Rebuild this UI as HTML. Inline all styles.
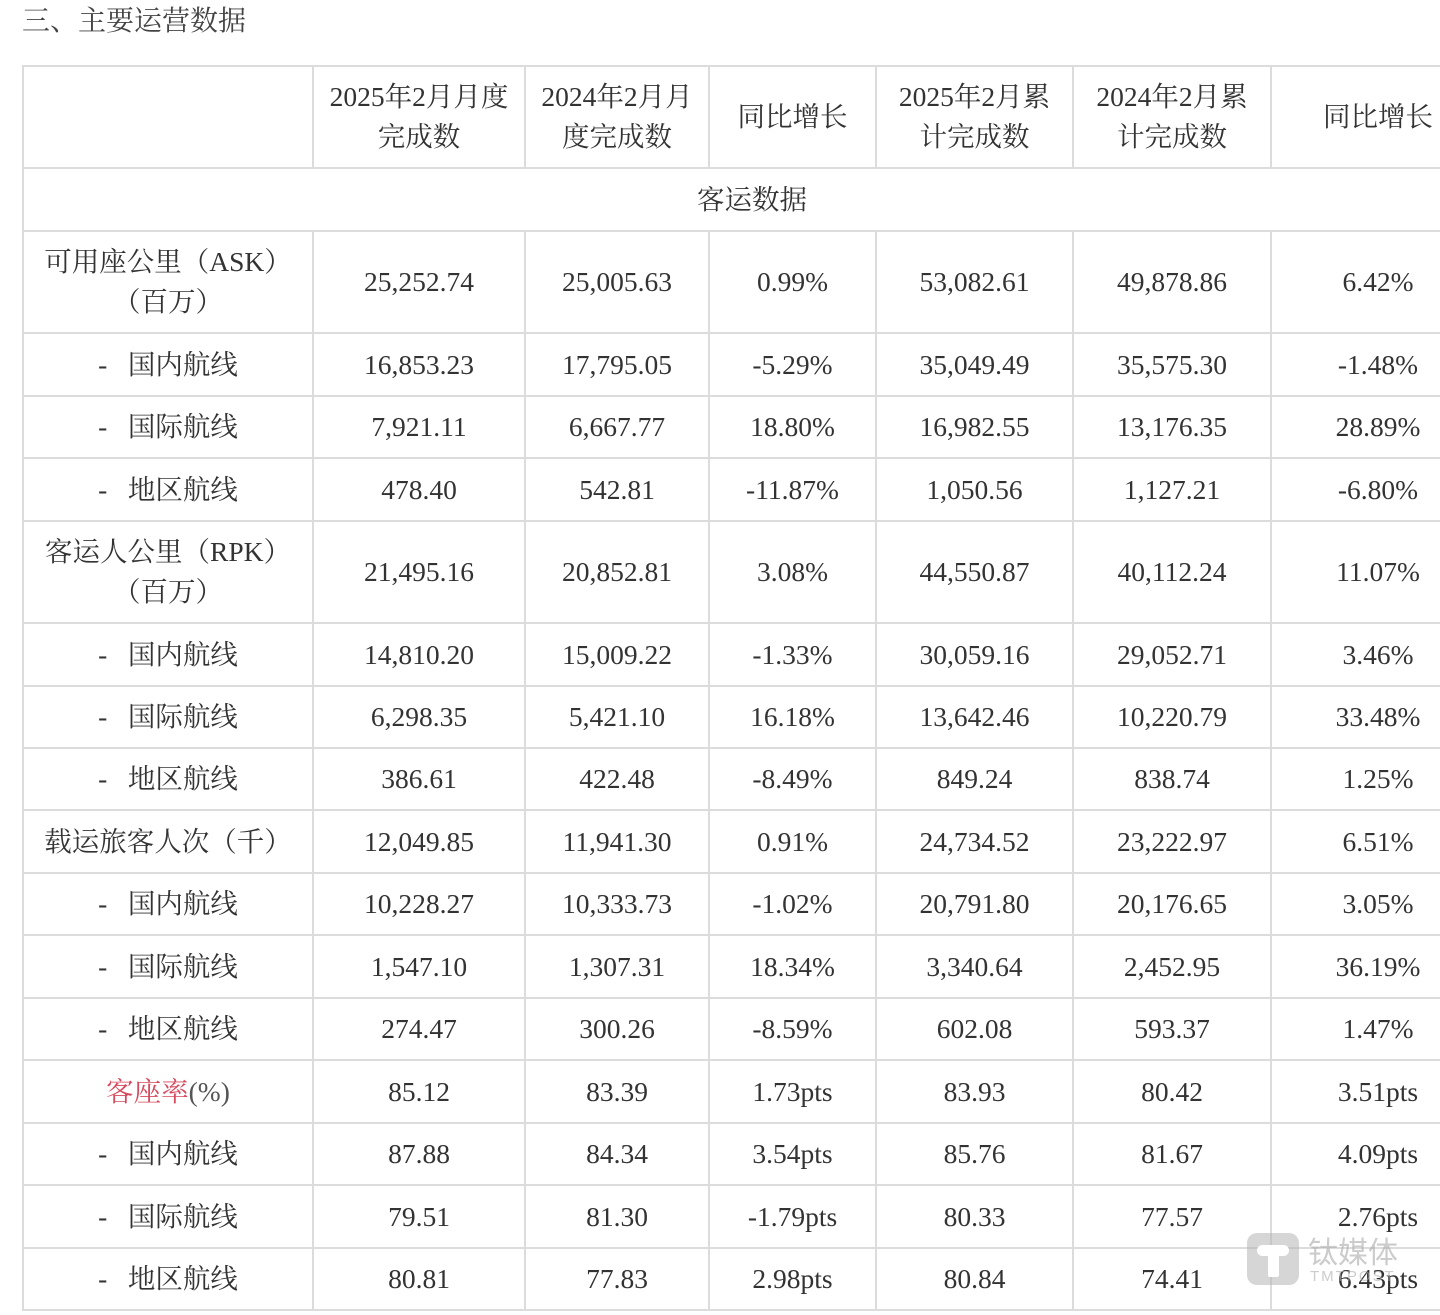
<!DOCTYPE html>
<html><head><meta charset="utf-8"><style>
body{margin:0;width:1440px;height:1315px;overflow:hidden;background:#fff;font-family:"Liberation Serif","Noto Serif CJK SC","Noto Serif CJK JP","Noto Serif CJK TC",serif;color:#333;position:relative}
h3{position:absolute;left:22px;top:2px;margin:0;font-weight:normal;font-size:28px;color:#444;line-height:40px}
table{position:absolute;left:22px;top:65px;border-collapse:collapse;table-layout:fixed;width:1462px}
td{border:2px solid #dcdcdc;text-align:center;font-size:27.5px;line-height:40px;padding:0 2px;vertical-align:middle;white-space:nowrap}
.r{color:#d64a5e}
.s{color:#555}
.wm{position:absolute;left:1247px;top:1233px;width:52px;height:52px;border-radius:10px;background:rgba(180,180,180,.55)}
.wm:before{content:"";position:absolute;left:10px;top:12px;width:32px;height:11px;border-radius:6px;background:#fff}
.wm:after{content:"";position:absolute;left:21px;top:20px;width:11px;height:24px;background:#fff;border-radius:2px}
.wt{position:absolute;left:1308px;top:1232px;font-family:"Noto Sans CJK SC",sans-serif;font-size:30px;color:rgba(170,170,170,.6);line-height:36px}
.wt2{position:absolute;left:1310px;top:1268px;font-family:"Liberation Sans",sans-serif;font-size:15px;color:rgba(170,170,170,.6);letter-spacing:2px}
</style></head><body>
<h3>三、主要运营数据</h3>
<table>
<colgroup><col style="width:290px"><col style="width:212px"><col style="width:184px"><col style="width:167px"><col style="width:197px"><col style="width:198px"><col style="width:214px"></colgroup>
<tr style="height:102px"><td></td><td>2025年2月月度<br>完成数</td><td>2024年2月月<br>度完成数</td><td>同比增长</td><td>2025年2月累<br>计完成数</td><td>2024年2月累<br>计完成数</td><td>同比增长</td></tr>
<tr style="height:63px"><td colspan="7"><span style="position:relative;left:-2px">客运数据</span></td></tr>
<tr style="height:102px"><td>可用座公里（ASK）<br>（百万）</td><td>25,252.74</td><td>25,005.63</td><td>0.99%</td><td>53,082.61</td><td>49,878.86</td><td>6.42%</td></tr>
<tr style="height:63px"><td>-&nbsp;&nbsp;&nbsp;国内航线</td><td>16,853.23</td><td>17,795.05</td><td>-5.29%</td><td>35,049.49</td><td>35,575.30</td><td>-1.48%</td></tr>
<tr style="height:62px"><td>-&nbsp;&nbsp;&nbsp;国际航线</td><td>7,921.11</td><td>6,667.77</td><td>18.80%</td><td>16,982.55</td><td>13,176.35</td><td>28.89%</td></tr>
<tr style="height:63px"><td>-&nbsp;&nbsp;&nbsp;地区航线</td><td>478.40</td><td>542.81</td><td>-11.87%</td><td>1,050.56</td><td>1,127.21</td><td>-6.80%</td></tr>
<tr style="height:102px"><td>客运人公里（RPK）<br>（百万）</td><td>21,495.16</td><td>20,852.81</td><td>3.08%</td><td>44,550.87</td><td>40,112.24</td><td>11.07%</td></tr>
<tr style="height:63px"><td>-&nbsp;&nbsp;&nbsp;国内航线</td><td>14,810.20</td><td>15,009.22</td><td>-1.33%</td><td>30,059.16</td><td>29,052.71</td><td>3.46%</td></tr>
<tr style="height:62px"><td>-&nbsp;&nbsp;&nbsp;国际航线</td><td>6,298.35</td><td>5,421.10</td><td>16.18%</td><td>13,642.46</td><td>10,220.79</td><td>33.48%</td></tr>
<tr style="height:62px"><td>-&nbsp;&nbsp;&nbsp;地区航线</td><td>386.61</td><td>422.48</td><td>-8.49%</td><td>849.24</td><td>838.74</td><td>1.25%</td></tr>
<tr style="height:63px"><td>载运旅客人次（千）</td><td>12,049.85</td><td>11,941.30</td><td>0.91%</td><td>24,734.52</td><td>23,222.97</td><td>6.51%</td></tr>
<tr style="height:62px"><td>-&nbsp;&nbsp;&nbsp;国内航线</td><td>10,228.27</td><td>10,333.73</td><td>-1.02%</td><td>20,791.80</td><td>20,176.65</td><td>3.05%</td></tr>
<tr style="height:63px"><td>-&nbsp;&nbsp;&nbsp;国际航线</td><td>1,547.10</td><td>1,307.31</td><td>18.34%</td><td>3,340.64</td><td>2,452.95</td><td>36.19%</td></tr>
<tr style="height:62px"><td>-&nbsp;&nbsp;&nbsp;地区航线</td><td>274.47</td><td>300.26</td><td>-8.59%</td><td>602.08</td><td>593.37</td><td>1.47%</td></tr>
<tr style="height:63px"><td><span class="r">客座率</span><span class="s">(%)</span></td><td>85.12</td><td>83.39</td><td>1.73pts</td><td>83.93</td><td>80.42</td><td>3.51pts</td></tr>
<tr style="height:62px"><td>-&nbsp;&nbsp;&nbsp;国内航线</td><td>87.88</td><td>84.34</td><td>3.54pts</td><td>85.76</td><td>81.67</td><td>4.09pts</td></tr>
<tr style="height:63px"><td>-&nbsp;&nbsp;&nbsp;国际航线</td><td>79.51</td><td>81.30</td><td>-1.79pts</td><td>80.33</td><td>77.57</td><td>2.76pts</td></tr>
<tr style="height:62px"><td>-&nbsp;&nbsp;&nbsp;地区航线</td><td>80.81</td><td>77.83</td><td>2.98pts</td><td>80.84</td><td>74.41</td><td>6.43pts</td></tr>
</table>
<div class="wm"></div><div class="wt">钛媒体</div><div class="wt2">TMTPOST</div>
</body></html>
